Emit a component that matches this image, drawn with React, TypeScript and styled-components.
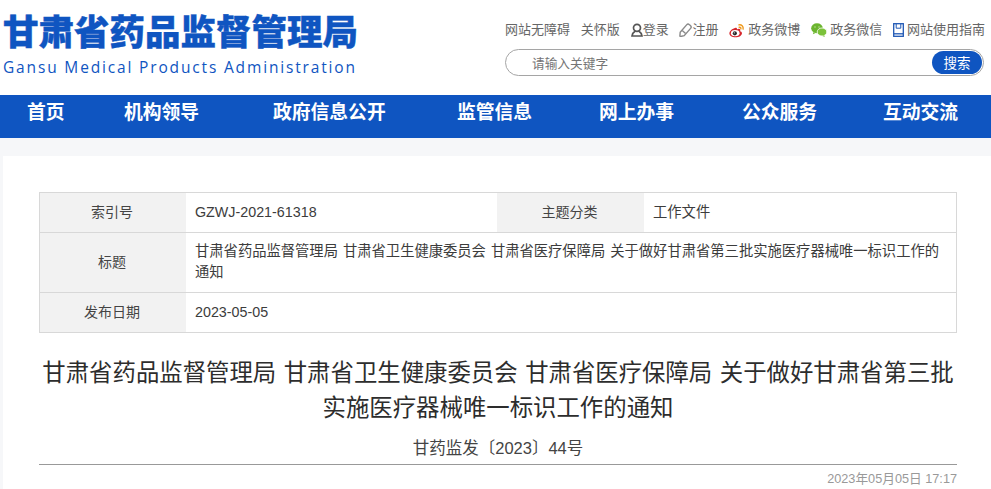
import React from "react";
import styled, { createGlobalStyle } from "styled-components";

const Global = createGlobalStyle`
  html, body { margin: 0; padding: 0; background: #fff; overflow: hidden; }
  body { font-family: "Liberation Sans", "Noto Sans CJK SC", sans-serif; color: #333; }
`;
const Page = styled.div`width: 991px; height: 489px; overflow: hidden;`;
const Header = styled.header`height: 95px; display: flex; justify-content: space-between; box-sizing: border-box; padding: 0 6px 0 3px;`;
const Brand = styled.div`display: flex; flex-direction: column; padding-top: 9px;`;
const BrandCn = styled.div`
  font-family: "Noto Sans CJK SC", sans-serif; font-weight: 900; font-size: 35.5px; line-height: 42px;
  color: #0f55c1; white-space: nowrap; -webkit-text-stroke: 0.4px #0f55c1;
`;
const BrandEn = styled.div`
  font-family: "Open Sans", sans-serif; font-size: 15.5px; line-height: 20px; margin-top: 6px;
  letter-spacing: 1.84px; color: #0f55c1; white-space: nowrap;
`;
const Tools = styled.div`display: flex; flex-direction: column; align-items: flex-start; padding-top: 21px; width: 480px;`;
const Links = styled.div`display: flex; align-items: center; font-size: 13px; line-height: 18px; color: #666; width: 100%; justify-content: space-between; white-space: nowrap;`;
const LinkItem = styled.span<{ $gap?: number }>`display: inline-flex; align-items: center; gap: ${(p) => p.$gap ?? 0}px;`;
const Search = styled.div`
  margin-top: 10px; width: 479px; height: 27px; box-sizing: border-box; border: 1px solid #a5a5a5; border-radius: 14px;
  display: flex; align-items: center; justify-content: space-between; padding-left: 26px; font-size: 12.7px; color: #757575; background: #fff;
`;
const SearchBtn = styled.span`
  width: 50px; height: 23px; margin-right: 1px; border-radius: 12px; background: #0f55c1; color: #fff; font-size: 13.5px; padding-bottom: 2px; box-sizing: border-box;
  display: flex; align-items: center; justify-content: center;
`;
const Nav = styled.nav`
  height: 43px; box-sizing: border-box; background: #0f55c1; display: grid; grid-template-columns: 97px 149px 184px 142px 143px 141px auto;
  align-items: center; padding: 0 0 11px 27px;
  font-family: "Noto Sans CJK SC", sans-serif; font-size: 18.8px; line-height: 24px; font-weight: 700; color: #fff; white-space: nowrap;
`;
const Main = styled.main`background: #f6f7f9; padding: 18px 0 0 3px; height: 351px; box-sizing: border-box;`;
const Sheet = styled.section`background: #fff; height: 100%; padding: 36px 34px 0 36px; box-sizing: border-box;`;
const Table = styled.div`
  display: grid; grid-template-columns: 146px 311px 147px 1fr; grid-template-rows: 40px 60px 39px;
  width: 918px; box-sizing: border-box; border: 1px solid #d8d8d8; font-size: 14px; color: #444;
`;
const Label = styled.div<{ $last?: boolean }>`
  background: #f2f2f2; display: flex; align-items: center; justify-content: center; padding: 0 2px 3px 0;
  border-bottom: ${(p) => (p.$last ? 0 : "1px solid #d8d8d8")};
`;
const Value = styled.div<{ $wide?: boolean; $last?: boolean }>`
  display: flex; align-items: center; padding: 0 9px 1px; line-height: 21px; word-spacing: 1px; border-bottom: ${(p) => (p.$last ? 0 : "1px solid #d8d8d8")};
  grid-column: ${(p) => (p.$wide ? "2 / 5" : "auto")}; font-size: 14.3px; color: #3c3c3c;
`;
const Title = styled.h1`
  margin: 23px 0 0; width: 918px; text-align: center; font-weight: 400; font-size: 23.4px; line-height: 35px; color: #2d2d2d; white-space: nowrap;
  word-spacing: 1px;
`;
const DocNo = styled.div`margin-top: 11px; width: 918px; text-align: center; font-size: 16.5px; line-height: 22px; color: #444;`;
const Rule = styled.div`width: 918px; border-top: 1px solid #999; margin-top: 5px;`;
const Stamp = styled.div`width: 918px; text-align: right; font-size: 12.7px; line-height: 16px; color: #999; margin-top: 6px;`;

const UserIcon = () => (
  <svg width="12" height="14" viewBox="0 0 12 14" fill="none" stroke="#555" strokeWidth="1.7">
    <circle cx="6" cy="4.8" r="3.5" />
    <path d="M4 8.3C2.4 9.4 1.2 11 1 13h10c-.2-2-1.4-3.6-3-4.7" />
  </svg>
);
const PenIcon = () => (
  <svg width="13" height="14" viewBox="0 0 13 14" fill="none" stroke="#8a8a8a" strokeWidth="1.4">
    <path d="M1.2 9.2 7.6 1.9a2 2 0 0 1 2.8-.2l1 .9a2 2 0 0 1 .2 2.8L5.2 12.7l-3.6.8a.6.6 0 0 1-.7-.7z" />
    <path d="M3.2 7.6 6.6 10.6" />
  </svg>
);
const WeiboIcon = () => (
  <svg width="16" height="15" viewBox="0 0 17 15">
    <path d="M7 4.6C3.4 5.6.3 8.2.4 10.8.5 13.2 3.4 14.8 6.8 14.8c3.8 0 7-2 7-4.4 0-1.3-1.2-1.9-2-2.1.4-1.1.3-2-.4-2.4-1-.5-2.4.2-3 .5.2-1.2 0-2.3-1.4-1.8z" fill="#d6262c" />
    <ellipse cx="6.6" cy="10.3" rx="4.6" ry="3.2" fill="#fff" />
    <circle cx="6.2" cy="10.5" r="2.2" fill="#2a2a2a" />
    <circle cx="5.6" cy="10" r=".6" fill="#fff" />
    <path d="M10.5 1.5c2.8-.6 5 1.6 4.5 4.5M10.8 4c1.3-.2 2 .6 1.8 1.8" fill="none" stroke="#ef9a1d" strokeWidth="1.5" strokeLinecap="round" />
  </svg>
);
const WechatIcon = () => (
  <svg width="16" height="14" viewBox="0 0 16 14">
    <ellipse cx="6" cy="5.2" rx="5.8" ry="5" fill="#6cb52f" />
    <path d="M2.5 9l-.6 2.2L4.6 10z" fill="#6cb52f" />
    <ellipse cx="11" cy="9" rx="4.8" ry="4" fill="#7cc23a" stroke="#fff" strokeWidth=".8" />
    <path d="M13.2 12.3l.6 1.6-2.4-1z" fill="#7cc23a" />
    <circle cx="4" cy="4" r=".7" fill="#c8e6a8" />
    <circle cx="8" cy="4" r=".7" fill="#c8e6a8" />
  </svg>
);
const BookIcon = () => (
  <svg width="11" height="14" viewBox="0 0 11 14" fill="none" stroke="#1f57b4" strokeWidth="1.3">
    <rect x=".7" y=".7" width="9.6" height="12.6" />
    <path d="M3.2 1v4.2h4.6V1" strokeWidth="1" />
    <path d="M1 10.8h9" />
  </svg>
);

const nav = ["首页", "机构领导", "政府信息公开", "监管信息", "网上办事", "公众服务", "互动交流"];

export default function App() {
  return (
    <Page>
      <Global />
      <Header>
        <Brand>
          <BrandCn>甘肃省药品监督管理局</BrandCn>
          <BrandEn>Gansu Medical Products Administration</BrandEn>
        </Brand>
        <Tools>
          <Links>
            <LinkItem>网站无障碍</LinkItem>
            <LinkItem>关怀版</LinkItem>
            <LinkItem><UserIcon />登录</LinkItem>
            <LinkItem><PenIcon />注册</LinkItem>
            <LinkItem $gap={3}><WeiboIcon />政务微博</LinkItem>
            <LinkItem $gap={3}><WechatIcon />政务微信</LinkItem>
            <LinkItem $gap={3}><BookIcon />网站使用指南</LinkItem>
          </Links>
          <Search>
            <span>请输入关键字</span>
            <SearchBtn>搜索</SearchBtn>
          </Search>
        </Tools>
      </Header>
      <Nav>{nav.map((n) => <span key={n}>{n}</span>)}</Nav>
      <Main>
        <Sheet>
          <Table>
            <Label>索引号</Label>
            <Value>GZWJ-2021-61318</Value>
            <Label>主题分类</Label>
            <Value>工作文件</Value>
            <Label>标题</Label>
            <Value $wide>甘肃省药品监督管理局 甘肃省卫生健康委员会 甘肃省医疗保障局 关于做好甘肃省第三批实施医疗器械唯一标识工作的通知</Value>
            <Label $last>发布日期</Label>
            <Value $wide $last>2023-05-05</Value>
          </Table>
          <Title>甘肃省药品监督管理局 甘肃省卫生健康委员会 甘肃省医疗保障局 关于做好甘肃省第三批<br />实施医疗器械唯一标识工作的通知</Title>
          <DocNo>甘药监发〔2023〕44号</DocNo>
          <Rule />
          <Stamp>2023年05月05日 17:17</Stamp>
        </Sheet>
      </Main>
    </Page>
  );
}
